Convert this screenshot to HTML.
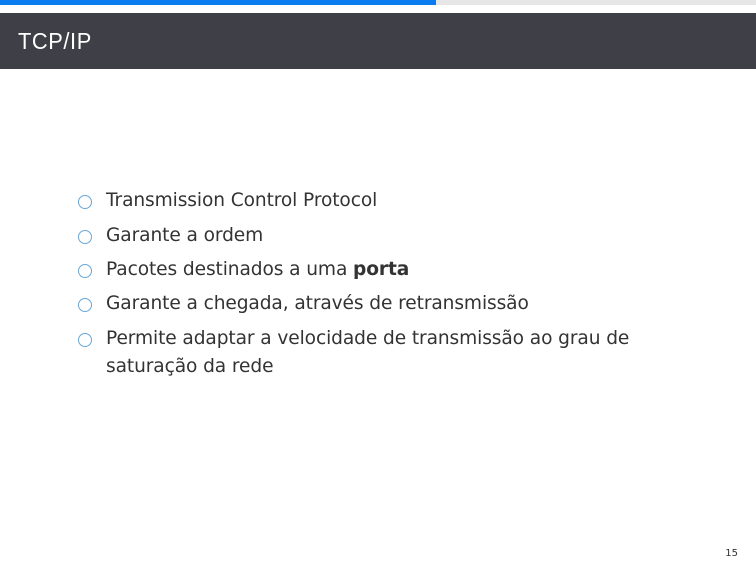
<!DOCTYPE html>
<html><head><style>
body{margin:0;width:756px;height:567px;background:#fff;position:relative;overflow:hidden;font-family:"DejaVu Sans","Liberation Sans",sans-serif;color:#23373b}
.pb{position:absolute;left:0;top:0;width:756px;height:5px;background:#e6e6e6}
.pb div{width:436px;height:5px;background:#0a7cf0}
.hd{position:absolute;left:0;top:13px;width:756px;height:56px;background:#3e3f47;color:#fff;font-size:23px}
.hd span{position:absolute;left:18px;top:15px;font-family:"Liberation Sans",sans-serif;letter-spacing:0.6px;transform:scaleX(0.95);transform-origin:left}
.it{position:absolute;left:106px;font-size:18.6px;line-height:28px;color:#333;letter-spacing:-0.1px}
.c{position:absolute;left:78px;width:12px;height:12px;border:1.3px solid #6aa7d6;border-radius:50%}
.pg{position:absolute;right:18px;top:548px;font-size:10px;color:#333}
</style></head><body>
<div class="pb"><div></div></div>
<div class="hd"><span>TCP/IP</span></div>
<div class="c" style="top:195px"></div><div class="it" style="top:187px">Transmission Control Protocol</div>
<div class="c" style="top:230px"></div><div class="it" style="top:222px">Garante a ordem</div>
<div class="c" style="top:264px"></div><div class="it" style="top:256px">Pacotes destinados a uma <b>porta</b></div>
<div class="c" style="top:298px"></div><div class="it" style="top:290px">Garante a chegada, através de retransmissão</div>
<div class="c" style="top:333px"></div><div class="it" style="top:325px">Permite adaptar a velocidade de transmissão ao grau de<br>saturação da rede</div>
<div class="pg">15</div>
</body></html>
